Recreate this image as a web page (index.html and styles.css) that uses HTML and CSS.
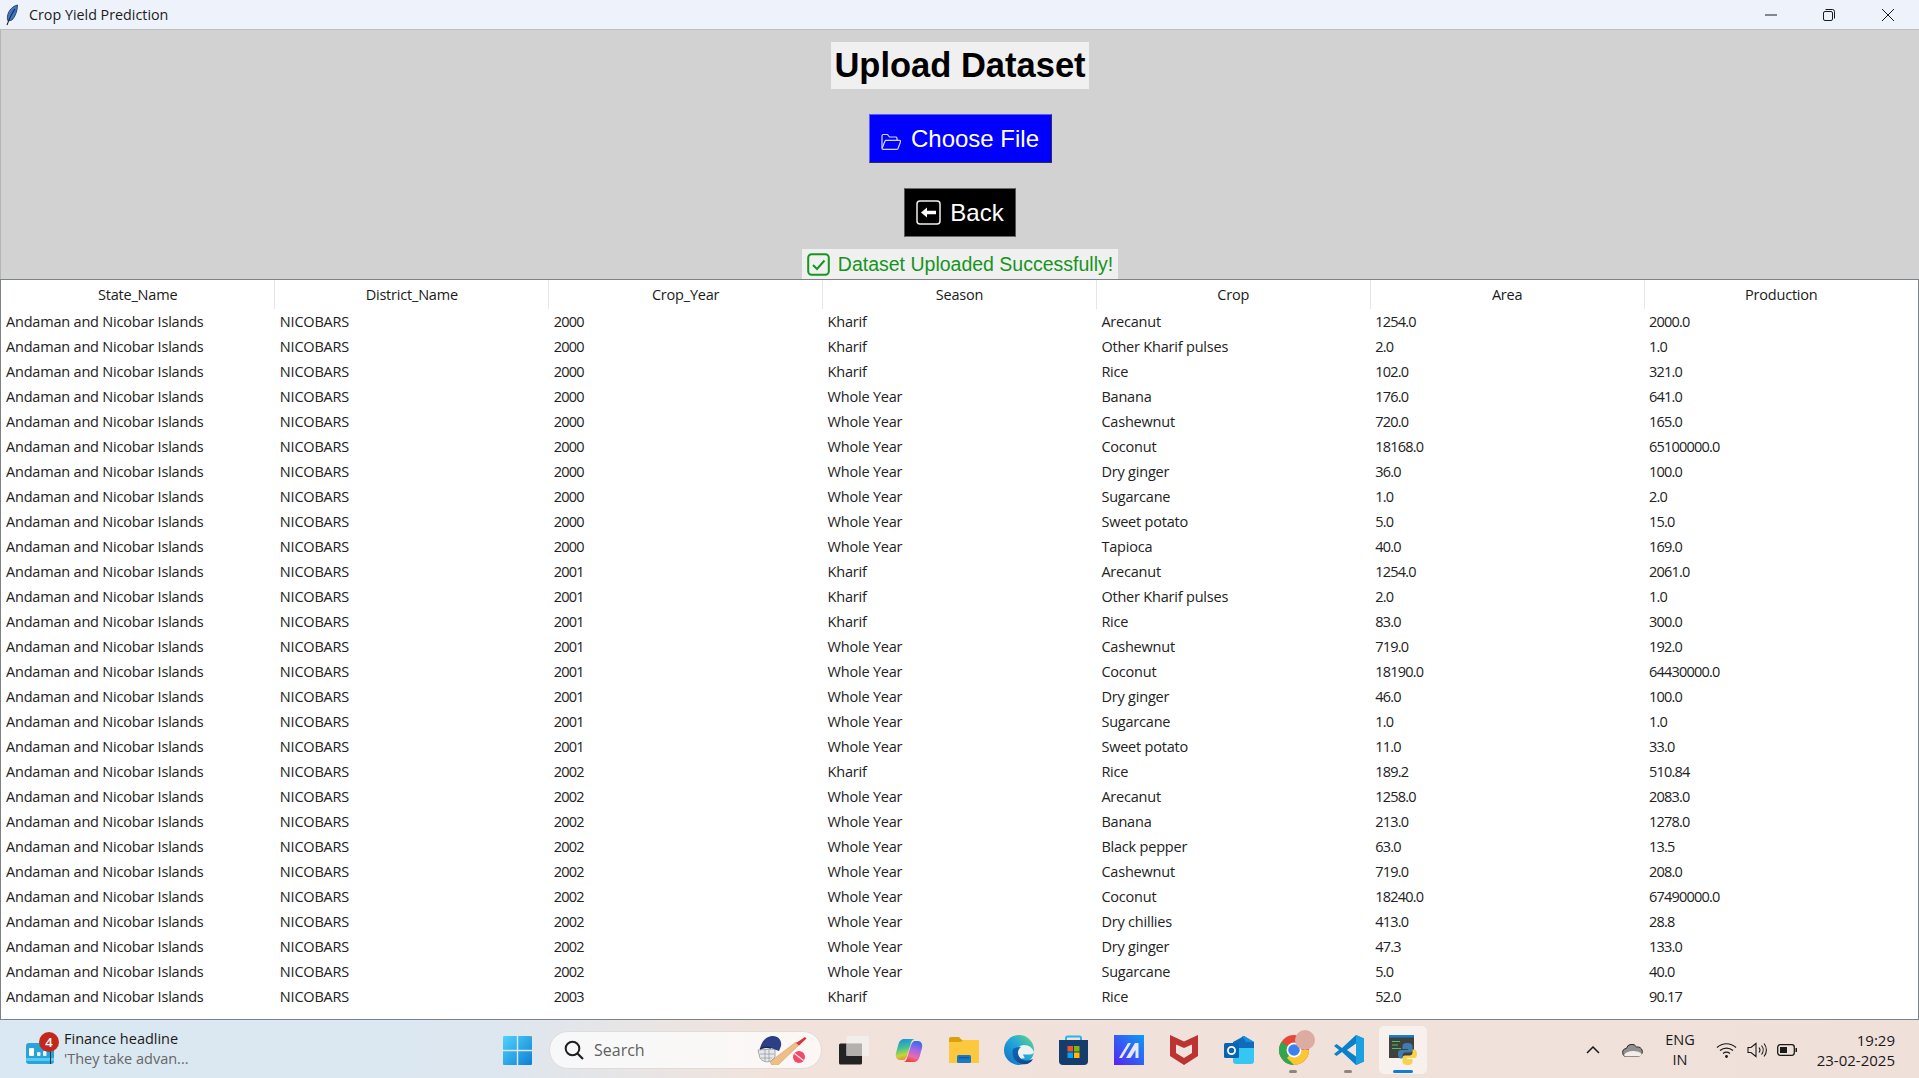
FILE: index.html
```html
<!DOCTYPE html>
<html lang="en">
<head>
  <meta charset="UTF-8">
  <title>Crop Yield Prediction</title>
  <link rel="stylesheet" href="styles.css">
</head>
<body>
  <!-- Title bar -->
  <header class="titlebar">
    <svg class="feather" viewBox="0 0 14 22" width="14" height="22">
      <path d="M12.500 1C8 2 3.500 6 2.500 12c-.4 2.500 0 4 .7 5L7 16c3-3 5.500-9 5.500-15z" fill="#3f78c9" stroke="#1d2c44" stroke-width=".8"/>
      <path d="M10 5C7 9 4.500 14 2 21" fill="none" stroke="#1c2430" stroke-width="1.100"/>
    </svg>
    <span class="title-text">Crop Yield Prediction</span>
    <div class="win-controls">
      <span class="win-btn"><svg viewBox="0 0 12 12" width="12" height="12"><path d="M0 6h12" stroke="#1a1a1a"/></svg></span>
      <span class="win-btn"><svg viewBox="0 0 12 12" width="12" height="12"><rect x=".5" y="2.500" width="9" height="9" rx="1.500" fill="none" stroke="#1a1a1a"/><path d="M2.500 .5h7a2 2 0 0 1 2 2v7" fill="none" stroke="#1a1a1a"/></svg></span>
      <span class="win-btn"><svg viewBox="0 0 12 12" width="12" height="12"><path d="M0 0l12 12M12 0L0 12" stroke="#1a1a1a"/></svg></span>
    </div>
  </header>

  <!-- Upload panel -->
  <section class="panel">
    <h1 class="heading">Upload Dataset</h1>
    <button class="btn btn-blue">
      <svg class="btn-folder" viewBox="0 0 20 18" width="20" height="18">
        <path d="M1 15V3a1.500 1.500 0 0 1 1.500-1.500h4l2 2.500h6.500a1 1 0 0 1 1 1v2" fill="none" stroke="#d9d9ff" stroke-width="1.200"/>
        <path d="M1 15.500 4 8a1 1 0 0 1 1-.7h13.500a1 1 0 0 1 1 1.300l-2.500 7a1 1 0 0 1-1 .7H2a1 1 0 0 1-1-.8z" fill="none" stroke="#d9d9ff" stroke-width="1.200"/>
      </svg>
      Choose File
    </button>
    <button class="btn btn-black">
      <svg class="btn-back" viewBox="0 0 25 25" width="25" height="25">
        <rect x="1" y="1" width="23" height="23" rx="3" fill="none" stroke="#f4f0e8" stroke-width="1.500"/>
        <path d="M5 12.500l6-5v3.200h9v3.600h-9v3.200z" fill="#fff"/>
      </svg>
      Back
    </button>
    <div class="status">
      <svg class="status-check" viewBox="0 0 23 23" width="23" height="23">
        <rect x="1.200" y="1.200" width="20.600" height="20.600" rx="3.500" fill="none" stroke="#18951f" stroke-width="2"/>
        <path d="M6 12l4 4 7.500-8.500" fill="none" stroke="#18951f" stroke-width="2"/>
      </svg>
      Dataset Uploaded Successfully!
    </div>
  </section>

  <!-- Data table -->
  <main class="table-wrap">
    <table class="data">
      <thead>
        <tr><th>State_Name</th><th>District_Name</th><th>Crop_Year</th><th>Season</th><th>Crop</th><th>Area</th><th>Production</th></tr>
      </thead>
      <tbody>
        <tr><td>Andaman and Nicobar Islands</td><td>NICOBARS</td><td>2000</td><td>Kharif</td><td>Arecanut</td><td>1254.0</td><td>2000.0</td></tr>
        <tr><td>Andaman and Nicobar Islands</td><td>NICOBARS</td><td>2000</td><td>Kharif</td><td>Other Kharif pulses</td><td>2.0</td><td>1.0</td></tr>
        <tr><td>Andaman and Nicobar Islands</td><td>NICOBARS</td><td>2000</td><td>Kharif</td><td>Rice</td><td>102.0</td><td>321.0</td></tr>
        <tr><td>Andaman and Nicobar Islands</td><td>NICOBARS</td><td>2000</td><td>Whole Year</td><td>Banana</td><td>176.0</td><td>641.0</td></tr>
        <tr><td>Andaman and Nicobar Islands</td><td>NICOBARS</td><td>2000</td><td>Whole Year</td><td>Cashewnut</td><td>720.0</td><td>165.0</td></tr>
        <tr><td>Andaman and Nicobar Islands</td><td>NICOBARS</td><td>2000</td><td>Whole Year</td><td>Coconut</td><td>18168.0</td><td>65100000.0</td></tr>
        <tr><td>Andaman and Nicobar Islands</td><td>NICOBARS</td><td>2000</td><td>Whole Year</td><td>Dry ginger</td><td>36.0</td><td>100.0</td></tr>
        <tr><td>Andaman and Nicobar Islands</td><td>NICOBARS</td><td>2000</td><td>Whole Year</td><td>Sugarcane</td><td>1.0</td><td>2.0</td></tr>
        <tr><td>Andaman and Nicobar Islands</td><td>NICOBARS</td><td>2000</td><td>Whole Year</td><td>Sweet potato</td><td>5.0</td><td>15.0</td></tr>
        <tr><td>Andaman and Nicobar Islands</td><td>NICOBARS</td><td>2000</td><td>Whole Year</td><td>Tapioca</td><td>40.0</td><td>169.0</td></tr>
        <tr><td>Andaman and Nicobar Islands</td><td>NICOBARS</td><td>2001</td><td>Kharif</td><td>Arecanut</td><td>1254.0</td><td>2061.0</td></tr>
        <tr><td>Andaman and Nicobar Islands</td><td>NICOBARS</td><td>2001</td><td>Kharif</td><td>Other Kharif pulses</td><td>2.0</td><td>1.0</td></tr>
        <tr><td>Andaman and Nicobar Islands</td><td>NICOBARS</td><td>2001</td><td>Kharif</td><td>Rice</td><td>83.0</td><td>300.0</td></tr>
        <tr><td>Andaman and Nicobar Islands</td><td>NICOBARS</td><td>2001</td><td>Whole Year</td><td>Cashewnut</td><td>719.0</td><td>192.0</td></tr>
        <tr><td>Andaman and Nicobar Islands</td><td>NICOBARS</td><td>2001</td><td>Whole Year</td><td>Coconut</td><td>18190.0</td><td>64430000.0</td></tr>
        <tr><td>Andaman and Nicobar Islands</td><td>NICOBARS</td><td>2001</td><td>Whole Year</td><td>Dry ginger</td><td>46.0</td><td>100.0</td></tr>
        <tr><td>Andaman and Nicobar Islands</td><td>NICOBARS</td><td>2001</td><td>Whole Year</td><td>Sugarcane</td><td>1.0</td><td>1.0</td></tr>
        <tr><td>Andaman and Nicobar Islands</td><td>NICOBARS</td><td>2001</td><td>Whole Year</td><td>Sweet potato</td><td>11.0</td><td>33.0</td></tr>
        <tr><td>Andaman and Nicobar Islands</td><td>NICOBARS</td><td>2002</td><td>Kharif</td><td>Rice</td><td>189.2</td><td>510.84</td></tr>
        <tr><td>Andaman and Nicobar Islands</td><td>NICOBARS</td><td>2002</td><td>Whole Year</td><td>Arecanut</td><td>1258.0</td><td>2083.0</td></tr>
        <tr><td>Andaman and Nicobar Islands</td><td>NICOBARS</td><td>2002</td><td>Whole Year</td><td>Banana</td><td>213.0</td><td>1278.0</td></tr>
        <tr><td>Andaman and Nicobar Islands</td><td>NICOBARS</td><td>2002</td><td>Whole Year</td><td>Black pepper</td><td>63.0</td><td>13.5</td></tr>
        <tr><td>Andaman and Nicobar Islands</td><td>NICOBARS</td><td>2002</td><td>Whole Year</td><td>Cashewnut</td><td>719.0</td><td>208.0</td></tr>
        <tr><td>Andaman and Nicobar Islands</td><td>NICOBARS</td><td>2002</td><td>Whole Year</td><td>Coconut</td><td>18240.0</td><td>67490000.0</td></tr>
        <tr><td>Andaman and Nicobar Islands</td><td>NICOBARS</td><td>2002</td><td>Whole Year</td><td>Dry chillies</td><td>413.0</td><td>28.8</td></tr>
        <tr><td>Andaman and Nicobar Islands</td><td>NICOBARS</td><td>2002</td><td>Whole Year</td><td>Dry ginger</td><td>47.3</td><td>133.0</td></tr>
        <tr><td>Andaman and Nicobar Islands</td><td>NICOBARS</td><td>2002</td><td>Whole Year</td><td>Sugarcane</td><td>5.0</td><td>40.0</td></tr>
        <tr><td>Andaman and Nicobar Islands</td><td>NICOBARS</td><td>2003</td><td>Kharif</td><td>Rice</td><td>52.0</td><td>90.17</td></tr>
      </tbody>
    </table>
  </main>

  <!-- Windows taskbar -->
  <footer class="taskbar">
    <div class="widget">
      <span class="widget-icon">
        <svg viewBox="0 0 28 22" width="28" height="22">
          <rect width="28" height="21" rx="3" fill="#2aa3d8"/>
          <rect y="15" width="28" height="3" fill="#56cdf0"/>
          <rect x="3" y="5" width="5" height="8" rx="1" fill="#fff"/>
          <rect x="11" y="9" width="3.500" height="4" rx="1" fill="#e8f6fc"/>
          <rect x="17" y="8" width="3.500" height="5" rx="1" fill="#e8f6fc"/>
          <rect x="24" y="0" width="1" height="21" fill="#15324a"/>
        </svg>
        <span class="widget-badge">4</span>
      </span>
      <span class="widget-text">
        <span class="widget-title">Finance headline</span>
        <span class="widget-sub">'They take advan...</span>
      </span>
    </div>

    <div class="task-icons">
      <span class="slot slot-start">
        <svg viewBox="0 0 29 29" width="29" height="29">
          <defs>
            <linearGradient id="winA" x1="0" y1="0" x2="1" y2="1"><stop offset="0" stop-color="#4fd3fb"/><stop offset="1" stop-color="#0f7fd4"/></linearGradient>
          </defs>
          <path d="M1 0h12.800v13.800H0V1a1 1 0 0 1 1-1zM15.200 0H28a1 1 0 0 1 1 1v12.800H15.200zM0 15.200h13.800V29H1a1 1 0 0 1-1-1zM15.200 15.200H29V28a1 1 0 0 1-1 1H15.200z" fill="url(#winA)"/>
        </svg>
      </span>
      <label class="search">
        <svg class="search-glass" viewBox="0 0 20 20" width="20" height="20">
          <circle cx="8.500" cy="8.500" r="6.800" fill="none" stroke="#1f1f1f" stroke-width="2"/>
          <path d="M13.500 13.500l5.500 5.500" stroke="#1f1f1f" stroke-width="2.200"/>
        </svg>
        <span class="search-text">Search</span>
        <svg class="search-art" viewBox="0 0 52 30" width="52" height="30">
          <path d="M1 15l2 8c2 3 6 5 11 3l4-4v-8z" fill="#e6e8ea" stroke="#8d959b" stroke-width=".8"/>
          <path d="M3 19h14M4 23h11M8 15v11M12 15v11" stroke="#8d959b" stroke-width=".7"/>
          <path d="M3 14C4 6 10 1 16 1c6 0 9 5 8 10l-2 5-8-3-8 0z" fill="#2b3f85"/>
          <path d="M3 14c4-2 8-2 11-1" fill="none" stroke="#1b2655" stroke-width="1.500"/>
          <path d="M13 27l26-20 3 3-21 20c-2 1-4 0-6 0z" fill="#eebf85" stroke="#cf9a5f" stroke-width=".6"/>
          <path d="M39 8l9-6 1.500 1.500-7.500 7z" fill="#d9343f"/>
          <circle cx="42" cy="22" r="6" fill="#ef4a6a"/>
          <path d="M37.500 18.500l9 7" stroke="#fbe2e6" stroke-width="1.400"/>
        </svg>
      </label>
      <span class="slot">
        <svg viewBox="0 0 30 29" width="30" height="29">
          <rect x="0" y="7.500" width="23" height="21" rx="1.500" fill="#232323"/>
          <rect x="7.500" y="0" width="22.500" height="20" rx="1.500" fill="#f1eeec" fill-opacity=".9"/>
          <rect x="7.500" y="7.500" width="15.500" height="12.500" fill="#b3b0ae"/>
        </svg>
      </span>
      <span class="slot">
        <svg viewBox="0 0 28 25" width="28" height="25">
          <defs>
            <linearGradient id="copA" x1="0.3" y1="0" x2="0.5" y2="1"><stop offset="0" stop-color="#1d8fe0"/><stop offset=".4" stop-color="#3cc09a"/><stop offset=".75" stop-color="#c5d43a"/><stop offset="1" stop-color="#f08a30"/></linearGradient>
            <linearGradient id="copB" x1="0.7" y1="0" x2="0.4" y2="1"><stop offset="0" stop-color="#2f6fe8"/><stop offset=".4" stop-color="#a565e6"/><stop offset=".75" stop-color="#ee6aa8"/><stop offset="1" stop-color="#e8452e"/></linearGradient>
          </defs>
          <path d="M10 1C6 1 4.500 3 3.500 6L1 15c-1 4 1 7 4 7h3c2 0 3-2 4-4l4-13c1-3 2-4 4-4z" fill="url(#copA)"/>
          <path d="M18 24c4 0 5.500-2 6.500-5L27 10c1-4-1-7-4-7h-3c-2 0-3 2-4 4l-4 13c-1 3-2 4-4 4z" fill="url(#copB)"/>
        </svg>
      </span>
      <span class="slot">
        <svg viewBox="0 0 30 26" width="30" height="26">
          <path d="M0 2a2 2 0 0 1 2-2h8l3 3h15a2 2 0 0 1 2 2v2H0z" fill="#d9a20d"/>
          <path d="M0 5h12l2-2h16v23H0z" fill="#fcc93e"/>
          <rect x="8" y="18" width="14" height="8" rx="1.500" fill="#1b78c2"/>
          <rect x="10" y="20" width="10" height="1.500" fill="#0e5c9f"/>
        </svg>
      </span>
      <span class="slot">
        <svg viewBox="0 0 30 30" width="30" height="30">
          <defs>
            <linearGradient id="edgeA" x1="0" y1="1" x2="1" y2="0"><stop offset="0" stop-color="#0c6cc0"/><stop offset=".55" stop-color="#22a8dc"/><stop offset="1" stop-color="#6bdc74"/></linearGradient>
            <linearGradient id="edgeB" x1="0" y1="0" x2="1" y2="1"><stop offset="0" stop-color="#0f6ab8"/><stop offset="1" stop-color="#123f86"/></linearGradient>
          </defs>
          <circle cx="15" cy="15" r="15" fill="url(#edgeA)"/>
          <path d="M13 17c0-4 3-7 7-7 5 0 9 3 10 7.500-1 1.500-3 2-5 2h-6c.5 1.500 1 2.500 2 3.500l-5 1c-2-1.500-3-4-3-7z" fill="#eef2ee"/>
          <path d="M9 14c-2 6 1 13 9 15 5 1 9-1 11-5-2 1-5 2-8 1.500-4-.7-7-4-7-8 0-2 1-4 3-5.500-4 0-7 1-8 2z" fill="url(#edgeB)"/>
        </svg>
      </span>
      <span class="slot">
        <svg viewBox="0 0 29 30" width="29" height="30">
          <path d="M7 6V3a1.500 1.500 0 0 1 1.500-1.500h12A1.500 1.500 0 0 1 22 3v3" fill="none" stroke="#2ab4e8" stroke-width="2"/>
          <path d="M0 5h29v21a4 4 0 0 1-4 4H4a4 4 0 0 1-4-4z" fill="#143c6c"/>
          <rect x="8.500" y="11" width="5.500" height="5.500" fill="#f2542d"/>
          <rect x="15" y="11" width="5.500" height="5.500" fill="#7fba00"/>
          <rect x="8.500" y="17.500" width="5.500" height="5.500" fill="#00a4ef"/>
          <rect x="15" y="17.500" width="5.500" height="5.500" fill="#ffb900"/>
        </svg>
      </span>
      <span class="slot">
        <svg viewBox="0 0 30 30" width="30" height="30">
          <defs>
            <linearGradient id="mA" x1="0" y1="1" x2="1" y2="0"><stop offset="0" stop-color="#5a22f0"/><stop offset="1" stop-color="#0a9cf5"/></linearGradient>
          </defs>
          <rect width="30" height="30" fill="url(#mA)"/>
          <path d="M5 23 14 8h3L8 23zM12 23 21 8h3.500v15h-3v-8l-5 8z" fill="#e6e8ff"/>
        </svg>
      </span>
      <span class="slot">
        <svg viewBox="0 0 28 30" width="28" height="30">
          <path d="M0 0l14 6.500L28 0v21l-14 9-14-9z" fill="#bd3331"/>
          <path d="M6 9.500l8 3.500 8-3.500v8.500l-8 5-8-5z" fill="#f0e2dc"/>
        </svg>
      </span>
      <span class="slot">
        <svg viewBox="0 0 30 28" width="30" height="28">
          <path d="M9 6 20 0l10 6v7H9z" fill="#0f6cbd"/>
          <path d="M18 0h2l10 6H22z" fill="#1490df"/>
          <path d="M9 12h21v13a3 3 0 0 1-3 3H12a3 3 0 0 1-3-3z" fill="#35c6f2"/>
          <rect x="0" y="7" width="15" height="15" rx="1.500" fill="#0a64b4"/>
          <circle cx="7.500" cy="14.500" r="3.600" fill="none" stroke="#fff" stroke-width="1.800"/>
        </svg>
      </span>
      <span class="slot slot-running">
        <span class="chrome-wrap">
          <svg viewBox="0 0 30 30" width="30" height="30">
            <circle cx="15" cy="15" r="15" fill="#e9463a"/>
            <path d="M15 15 2 22.500A15 15 0 0 0 15 30z" fill="#2ea84f"/>
            <path d="M2 22.500A15 15 0 0 1 2.500 7L15 15z" fill="#2ea84f"/>
            <path d="M15 15h15a15 15 0 0 1-15 15l-7-7z" fill="#fbc62f"/>
            <circle cx="15" cy="15" r="7.500" fill="#fff"/>
            <circle cx="15" cy="15" r="5.800" fill="#3a80ee"/>
          </svg>
          <span class="chrome-avatar"></span>
        </span>
      </span>
      <span class="slot slot-running">
        <svg viewBox="0 0 30 30" width="30" height="30">
          <path d="M22 0 30 3.500v23L22 30 8 17l-5.500 4L0 19l5-4-5-4 2.500-2L8 13z" fill="#0a7fcb"/>
          <path d="M22 0 30 3.500v23L22 30z" fill="#1ba1e2"/>
          <path d="M22 8.500v13L13 15z" fill="#f1e4de"/>
        </svg>
      </span>
      <span class="slot slot-active">
        <svg viewBox="0 0 28 30" width="28" height="30">
          <rect width="25" height="23" fill="#3f4040"/>
          <rect width="25" height="2.500" fill="#1c7fc4"/>
          <path d="M3 6.500h8M3 10h6M3 13.500h9" stroke="#4cc44c" stroke-width="1.200"/>
          <g transform="translate(9 8)">
            <path d="M9.500 0C5 0 4.500 2 4.500 3.500V6h5.300v1H2.500C1 7 0 8.500 0 11s1 4.500 2.500 4.500h2v-3c0-2 1.500-3 3-3H12c1.500 0 2.500-1 2.500-2.500V3.500C14.500 1.500 13 0 9.500 0z" fill="#3f7cb2"/>
            <path d="M9.500 22c4.500 0 5-2 5-3.500V16H9.200v-1h7.300c1.500 0 2.500-1.500 2.500-4s-1-4.500-2.500-4.500h-2v3c0 2-1.500 3-3 3H7c-1.500 0-2.500 1-2.500 2.500v3.500C4.500 20.500 6 22 9.500 22z" fill="#f5d34a"/>
          </g>
        </svg>
      </span>
    </div>

    <div class="tray">
      <svg class="tray-chevron" viewBox="0 0 14 8" width="14" height="8"><path d="M1 7l6-6 6 6" fill="none" stroke="#1a1a1a" stroke-width="1.500"/></svg>
      <svg class="tray-cloud" viewBox="0 0 21 13" width="21" height="13">
        <path d="M5 12.500a4 4 0 0 1-.6-8A5.500 5.500 0 0 1 14.500 3a4.500 4.500 0 0 1 2 9.500z" fill="#8f8f8f" stroke="#2a2a2a" stroke-width="1"/>
        <path d="M2 11c2-3 5-4 9-4 4 0 7 1 9 3-1 2-2 2.500-3.500 2.500H5c-1.500 0-2.500-.5-3-1.500z" fill="#f4ece8"/>
      </svg>
      <span class="tray-lang">ENG<br>IN</span>
      <svg class="tray-wifi" viewBox="0 0 21 16" width="21" height="16">
        <path d="M1 5.500c5.500-5 13.500-5 19 0M4 8.500c3.800-3.200 9.200-3.200 13 0M7 11.500c2-1.500 5-1.500 7 0" fill="none" stroke="#1a1a1a" stroke-width="1.200"/>
        <circle cx="10.500" cy="14.500" r="1.400" fill="#1a1a1a"/>
      </svg>
      <svg class="tray-sound" viewBox="0 0 20 16" width="20" height="16">
        <path d="M1 5.500h3L9 1.500v13l-5-4H1z" fill="none" stroke="#1a1a1a" stroke-width="1.100"/>
        <path d="M12 5.500a4 4 0 0 1 0 5M14.500 3.500a7 7 0 0 1 0 9M17 1.500a10 10 0 0 1 0 13" fill="none" stroke="#1a1a1a" stroke-width="1.100"/>
      </svg>
      <svg class="tray-battery" viewBox="0 0 21 12" width="21" height="12">
        <rect x=".7" y=".7" width="16.600" height="10.600" rx="2.500" fill="none" stroke="#1a1a1a" stroke-width="1.300"/>
        <rect x="3" y="3" width="7" height="6" fill="#1a1a1a"/>
        <path d="M18.500 4h1.500v4h-1.500z" fill="#1a1a1a"/>
      </svg>
      <span class="tray-clock">19:29<br>23-02-2025</span>
    </div>
  </footer>
</body>
</html>
```

FILE: styles.css
```css
* {
  box-sizing: border-box;
}

html, body {
  margin: 0;
  height: 100%;
}

body {
  width: 1919px;
  height: 1078px;
  overflow: hidden;
  display: flex;
  flex-direction: column;
  background: #d2d2d2;
  font-family: "Open Sans", "Noto Sans", sans-serif;
  color: #1a1a1a;
}

/* === Title bar === */
.titlebar {
  height: 30px;
  flex: none;
  display: flex;
  align-items: center;
  padding-left: 5px;
  background: #eef3fb;
  border-bottom: 1px solid #bdbdbd;
}

.feather {
  margin-right: 10px;
}

.title-text {
  font-size: 14.300px;
  color: #1c1c1c;
}

.win-controls {
  margin-left: auto;
  display: flex;
  padding-right: 2px;
}

.win-btn {
  width: 58.500px;
  display: flex;
  justify-content: center;
}

/* === Upload panel === */
.panel {
  height: 249px;
  flex: none;
  display: flex;
  flex-direction: column;
  align-items: center;
  padding-top: 12px;
  font-family: "Liberation Sans", Arial, sans-serif;
  border-left: 1px solid #b5b5b5;
}

.heading {
  margin: 0;
  width: 258px;
  height: 47px;
  display: flex;
  align-items: center;
  justify-content: center;
  background: #f0f0f0;
  font-size: 34.500px;
  font-weight: bold;
  white-space: nowrap;
  color: #000;
}

.btn {
  display: flex;
  align-items: center;
  justify-content: center;
  height: 49px;
  margin-top: 25px;
  padding: 0;
  font-family: inherit;
  font-size: 24px;
  color: #fff;
  border: 1px solid;
}

.btn-blue {
  width: 183px;
  background: #0000ff;
  border-color: #5c5cff #2f2f55 #2f2f55 #5c5cff;
}

.btn-folder {
  margin: 6px 10px 0 0;
}

.btn-black {
  width: 112px;
  background: #000;
  border-color: #6a6a6a #555 #6a6a6a #555;
}

.btn-back {
  margin-right: 9px;
}

.status {
  width: 316px;
  height: 30px;
  margin-top: 12px;
  display: flex;
  align-items: center;
  justify-content: center;
  background: #f0f0f0;
  font-size: 19.500px;
  color: #15951c;
}

.status-check {
  margin-right: 8px;
}

/* === Table === */
.table-wrap {
  height: 741px;
  flex: none;
  background: #fff;
  border: 1px solid #7d8286;
}

.data {
  width: 100%;
  table-layout: fixed;
  border-collapse: collapse;
  font-size: 14.500px;
  letter-spacing: -0.2px;
}

.data th {
  height: 29px;
  font-weight: normal;
  text-align: center;
  border-right: 1px solid #e6e6e6;
  color: #1a1a1a;
}

.data th:last-child {
  border-right: none;
}

.data td {
  height: 25px;
  padding: 0 0 0 5px;
  white-space: nowrap;
  color: #222;
}

.data td:nth-child(3),
.data td:nth-child(6),
.data td:nth-child(7) {
  letter-spacing: -0.8px;
}

/* === Taskbar === */
.taskbar {
  height: 58px;
  flex: 1;
  display: flex;
  align-items: center;
  padding-top: 2px;
  background: linear-gradient(90deg, #d9e8f2 0%, #dce7f0 25%, #f1e3dc 40%, #efe0da 100%);
  font-family: "Open Sans", "Noto Sans", sans-serif;
}

.widget {
  width: 489px;
  flex: none;
  display: flex;
  align-items: center;
  padding-left: 26px;
}

.widget-icon {
  position: relative;
  width: 28px;
  height: 22px;
  margin: 8px 10px 0 0;
}

.widget-badge {
  position: absolute;
  top: -11px;
  left: 13px;
  width: 20px;
  height: 20px;
  border-radius: 50%;
  background: #c4281c;
  color: #fff;
  font-size: 13px;
  font-weight: 600;
  line-height: 20px;
  text-align: center;
}

.widget-text {
  display: flex;
  flex-direction: column;
  margin-top: -2px;
  font-size: 14.500px;
  line-height: 20px;
}

.widget-sub {
  color: #666;
}

.task-icons {
  display: flex;
  align-items: center;
}

.slot {
  position: relative;
  width: 55px;
  height: 48px;
  display: flex;
  align-items: center;
  justify-content: center;
}

.slot-start {
  width: 56px;
}

.search {
  width: 273px;
  height: 38px;
  margin: 0 4px 0 4px;
  display: flex;
  align-items: center;
  padding: 0 12px 0 14px;
  border-radius: 19px;
  background: rgba(255, 255, 255, 0.72);
  border: 1px solid #e2dcd9;
}

.search-text {
  margin-left: 10px;
  font-size: 16px;
  color: #5f5f5f;
}

.search-art {
  margin-left: auto;
}

.slot-running::after {
  content: "";
  position: absolute;
  bottom: 1px;
  left: 23px;
  width: 8px;
  height: 3px;
  border-radius: 2px;
  background: #8b8683;
}

.slot-active {
  width: 48px;
  margin-left: 3px;
  border-radius: 5px;
  background: rgba(255, 255, 255, 0.5);
}

.slot-active::after {
  content: "";
  position: absolute;
  bottom: 1px;
  left: 14px;
  width: 20px;
  height: 3px;
  border-radius: 2px;
  background: #0f7fd4;
}

.chrome-wrap {
  position: relative;
  width: 30px;
  height: 30px;
}

.chrome-avatar {
  position: absolute;
  top: -5px;
  right: -6px;
  width: 20px;
  height: 20px;
  border-radius: 50%;
  background: #dcaca3;
}

/* === System tray === */
.tray {
  flex: 1;
  display: flex;
  align-items: center;
  padding-left: 159px;
}

.tray-cloud {
  margin-left: 22px;
}

.tray-lang {
  width: 50px;
  margin-left: 12px;
  font-size: 14.500px;
  line-height: 20px;
  text-align: center;
}

.tray-wifi {
  margin-left: 11px;
}

.tray-sound {
  margin-left: 10px;
}

.tray-battery {
  margin-left: 10px;
}

.tray-clock {
  margin-left: auto;
  padding-right: 24px;
  font-size: 15px;
  line-height: 20px;
  text-align: right;
}
```
